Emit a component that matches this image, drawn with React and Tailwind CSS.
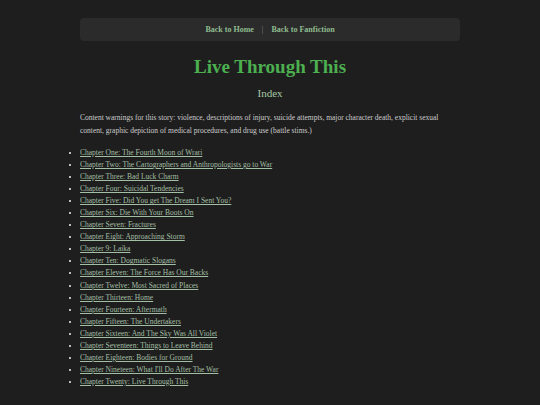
import React from "react";

const chapters = [
  "Chapter One: The Fourth Moon of Wrari",
  "Chapter Two: The Cartographers and Anthropologists go to War",
  "Chapter Three: Bad Luck Charm",
  "Chapter Four: Suicidal Tendencies",
  "Chapter Five: Did You get The Dream I Sent You?",
  "Chapter Six: Die With Your Boots On",
  "Chapter Seven: Fractures",
  "Chapter Eight: Approaching Storm",
  "Chapter 9: Laika",
  "Chapter Ten: Dogmatic Slogans",
  "Chapter Eleven: The Force Has Our Backs",
  "Chapter Twelve: Most Sacred of Places",
  "Chapter Thirteen: Home",
  "Chapter Fourteen: Aftermath",
  "Chapter Fifteen: The Undertakers",
  "Chapter Sixteen: And The Sky Was All Violet",
  "Chapter Seventeen: Things to Leave Behind",
  "Chapter Eighteen: Bodies for Ground",
  "Chapter Nineteen: What I'll Do After The War",
  "Chapter Twenty: Live Through This",
];

export default function App() {
  return (
    <div
      className="min-h-screen w-full bg-[#1e1e1e] text-[#cccccc]"
      style={{ fontFamily: "'Liberation Serif', serif" }}
    >
      <div className="w-[380px] mx-auto pt-[18px] pb-6">
        {/* Top nav */}
        <nav className="h-[23px] rounded-[4px] bg-[#2b2b2b] flex items-center justify-center gap-[8px] text-[8px] font-bold text-[#8fbc8f]">
          <a href="#" className="no-underline">Back to Home</a>
          <span className="text-[#888] font-normal">|</span>
          <a href="#" className="no-underline">Back to Fanfiction</a>
        </nav>

        {/* Heading */}
        <h1 className="mt-[14px] text-center text-[19px] leading-[24px] font-bold text-[#4caf50]">
          Live Through This
        </h1>
        <h2 className="mt-[7px] text-center text-[11px] leading-[14px] text-[#a5c8a5]">
          Index
        </h2>

        {/* Warnings */}
        <p className="mt-[11px] text-[7.5px] leading-[13px] text-[#cccccc]">
          Content warnings for this story: violence, descriptions of injury, suicide attempts, major
          character death, explicit sexual content, graphic depiction of medical procedures, and drug
          use (battle stims.)
        </p>

        {/* Chapter list */}
        <ul className="mt-[10px] list-[square] pl-0 ml-0 text-[7.5px] leading-[12.05px] marker:text-[#bbbbbb]">
          {chapters.map((c) => (
            <li key={c} className="ml-0">
              <a href="#" className="underline text-[#a3bfa3]">
                {c}
              </a>
            </li>
          ))}
        </ul>
      </div>
    </div>
  );
}
